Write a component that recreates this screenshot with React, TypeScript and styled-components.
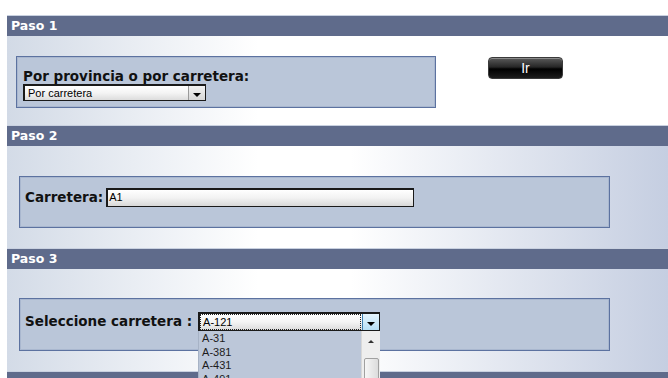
import { createGlobalStyle, styled } from 'styled-components';

const GlobalStyle = createGlobalStyle`
  html, body {
    margin: 0;
    padding: 0;
    background: #ffffff;
    overflow: hidden;
  }
  body {
    font-family: 'DejaVu Sans', Verdana, sans-serif;
  }
`;

const roads = ['A-31', 'A-381', 'A-431', 'A-491'];

const App = () => {
  return (
    <Page>
      <GlobalStyle />
      <Header>Paso 1</Header>
      <Body $height={89} $fade="first">
        <Row>
          <Box $width={420} $height={52} $top={20} $left={9} $pad="12px 0 0 6px">
            <Column>
              <Label>Por provincia o por carretera:</Label>
              <Select $width={183}>
                <SelectText>Por carretera</SelectText>
                <Arrow>
                  <Triangle />
                </Arrow>
              </Select>
            </Column>
          </Box>
          <GoButton>Ir</GoButton>
        </Row>
      </Body>
      <Header>Paso 2</Header>
      <Body $height={102}>
        <Box $width={591} $height={52} $top={30} $left={12} $pad="11px 0 0 5px">
          <InlineRow>
            <Label>Carretera:</Label>
            <TextInput>A1</TextInput>
          </InlineRow>
        </Box>
      </Body>
      <Header>Paso 3</Header>
      <Body $height={102}>
        <Box $width={591} $height={53} $top={29} $left={12} $pad="13px 0 0 5px">
          <InlineRow>
            <Label>Seleccione carretera :</Label>
            <SelectWrap>
              <Select $width={182} $tall>
                <FocusText>A-121</FocusText>
                <Arrow $active>
                  <Triangle />
                </Arrow>
              </Select>
              <DropList>
                <Options>
                  {roads.map((r) => (
                    <Option key={r}>{r}</Option>
                  ))}
                </Options>
                <ScrollBar>
                  <UpArrow />
                  <Thumb />
                </ScrollBar>
              </DropList>
            </SelectWrap>
          </InlineRow>
        </Box>
      </Body>
      <Header />
    </Page>
  );
};

export default App;

const Page = styled.div`
  display: flex;
  flex-direction: column;
  width: 668px;
  height: 378px;
  padding: 15px 0 0 7px;
  box-sizing: border-box;
`;

const Header = styled.div`
  height: 21px;
  box-sizing: border-box;
  border-top: 1px solid #c9d1e0;
  background: #5f6b8b;
  color: #ffffff;
  font-family: 'DejaVu Sans', Verdana, sans-serif;
  font-weight: bold;
  font-size: 12.5px;
  line-height: 20px;
  padding-left: 4px;
  flex-shrink: 0;
`;

const Body = styled.div<{ $height: number; $fade?: 'first' }>`
  height: ${({ $height }) => $height}px;
  flex-shrink: 0;
  box-sizing: border-box;
  background: ${({ $fade }) =>
    $fade === 'first'
      ? 'linear-gradient(to right, #d2dae6 0%, #ffffff 38%, #ffffff 100%)'
      : 'linear-gradient(to right, #d3dbe7 0%, #ffffff 38%, #ffffff 52%, #c5cee1 100%)'};
`;

const Row = styled.div`
  display: flex;
  align-items: flex-start;
`;

const Box = styled.div<{
  $width: number;
  $height: number;
  $top: number;
  $left: number;
  $pad: string;
}>`
  width: ${({ $width }) => $width}px;
  height: ${({ $height }) => $height}px;
  margin: ${({ $top, $left }) => `${$top}px 0 0 ${$left}px`};
  padding: ${({ $pad }) => $pad};
  box-sizing: border-box;
  background: #bac6d9;
  border: 1px solid #5c72a0;
  box-shadow: inset 0 0 0 1px #a9b7cf;
`;

const Column = styled.div`
  display: flex;
  flex-direction: column;
`;

const InlineRow = styled.div`
  display: flex;
  align-items: center;
  gap: 3px;
`;

const Label = styled.span`
  font-family: 'DejaVu Sans', Verdana, sans-serif;
  font-weight: bold;
  font-size: 13.5px;
  line-height: 15px;
  color: #111111;
  white-space: nowrap;
`;

const Select = styled.div<{ $width: number; $tall?: boolean }>`
  display: flex;
  width: ${({ $width }) => $width}px;
  height: ${({ $tall }) => ($tall ? 19 : 17)}px;
  box-sizing: border-box;
  border: 1px solid #1a1a1a;
  border-top-width: 2px;
  border-left-width: 2px;
  background: linear-gradient(to bottom, #ffffff 0%, #f4f4f4 50%, #dcdcdc 100%);
`;

const SelectText = styled.span`
  flex: 1;
  font-family: 'Liberation Sans', Arial, sans-serif;
  font-size: 11px;
  line-height: 14px;
  padding-left: 3px;
  color: #000000;
`;

const FocusText = styled.span`
  flex: 1;
  font-family: 'Liberation Sans', Arial, sans-serif;
  font-size: 11px;
  line-height: 14px;
  padding-left: 2px;
  margin: 0 1px 0 0;
  color: #000000;
  border: 1px dotted #222222;
`;

const Arrow = styled.div<{ $active?: boolean }>`
  width: 17px;
  display: flex;
  align-items: center;
  justify-content: center;
  box-sizing: border-box;
  border-left: 1px solid ${({ $active }) => ($active ? '#3c7fb1' : '#9a9a9a')};
  background: ${({ $active }) =>
    $active
      ? 'linear-gradient(to bottom, #e5f4fc, #b6dff6)'
      : 'linear-gradient(to bottom, #f2f2f2, #d6d6d6)'};
`;

const Triangle = styled.span`
  width: 0;
  height: 0;
  margin-top: 3px;
  border-left: 4px solid transparent;
  border-right: 4px solid transparent;
  border-top: 4px solid #000000;
`;

const GoButton = styled.div`
  width: 75px;
  height: 22px;
  margin: 21px 0 0 52px;
  box-sizing: border-box;
  border: 1px solid #3a3a3a;
  border-radius: 4px;
  background: linear-gradient(to bottom, #5a5a5a 0%, #262626 45%, #000000 55%, #1c1c1c 100%);
  box-shadow: inset 0 1px 0 #8a8a8a;
  color: #ffffff;
  font-family: 'Liberation Sans', Arial, sans-serif;
  font-size: 14px;
  line-height: 20px;
  text-align: center;
`;

const TextInput = styled.div`
  width: 308px;
  height: 19px;
  box-sizing: border-box;
  border: 1px solid #1a1a1a;
  border-top-width: 2px;
  border-left-width: 2px;
  background: linear-gradient(to bottom, #ffffff 0%, #f2f2f2 50%, #d8d8d8 100%);
  font-family: 'Liberation Sans', Arial, sans-serif;
  font-size: 11px;
  line-height: 15px;
  padding-left: 1px;
  color: #000000;
`;

const SelectWrap = styled.div`
  position: relative;
  margin-left: 3px;
`;

const DropList = styled.div`
  position: absolute;
  top: 19px;
  left: 0;
  width: 182px;
  height: 60px;
  display: flex;
  box-sizing: border-box;
  border-left: 1px solid #a7b3c6;
  background: #bcc7d9;
  z-index: 2;
`;

const Options = styled.div`
  flex: 1;
  padding-top: 1px;
`;

const Option = styled.div`
  font-family: 'Liberation Sans', Arial, sans-serif;
  font-size: 11px;
  line-height: 13.5px;
  padding-left: 3px;
  color: #1c1c1c;
`;

const ScrollBar = styled.div`
  width: 18px;
  display: flex;
  flex-direction: column;
  align-items: center;
  background: #eeeeee;
  border-left: 1px solid #d8d8d8;
`;

const UpArrow = styled.span`
  width: 0;
  height: 0;
  margin-top: 9px;
  border-left: 3px solid transparent;
  border-right: 3px solid transparent;
  border-bottom: 3px solid #333333;
`;

const Thumb = styled.div`
  width: 15px;
  height: 30px;
  margin-top: 15px;
  box-sizing: border-box;
  border: 1px solid #a0a0a0;
  border-radius: 2px;
  background: linear-gradient(to right, #f6f6f6, #dcdcdc);
`;
